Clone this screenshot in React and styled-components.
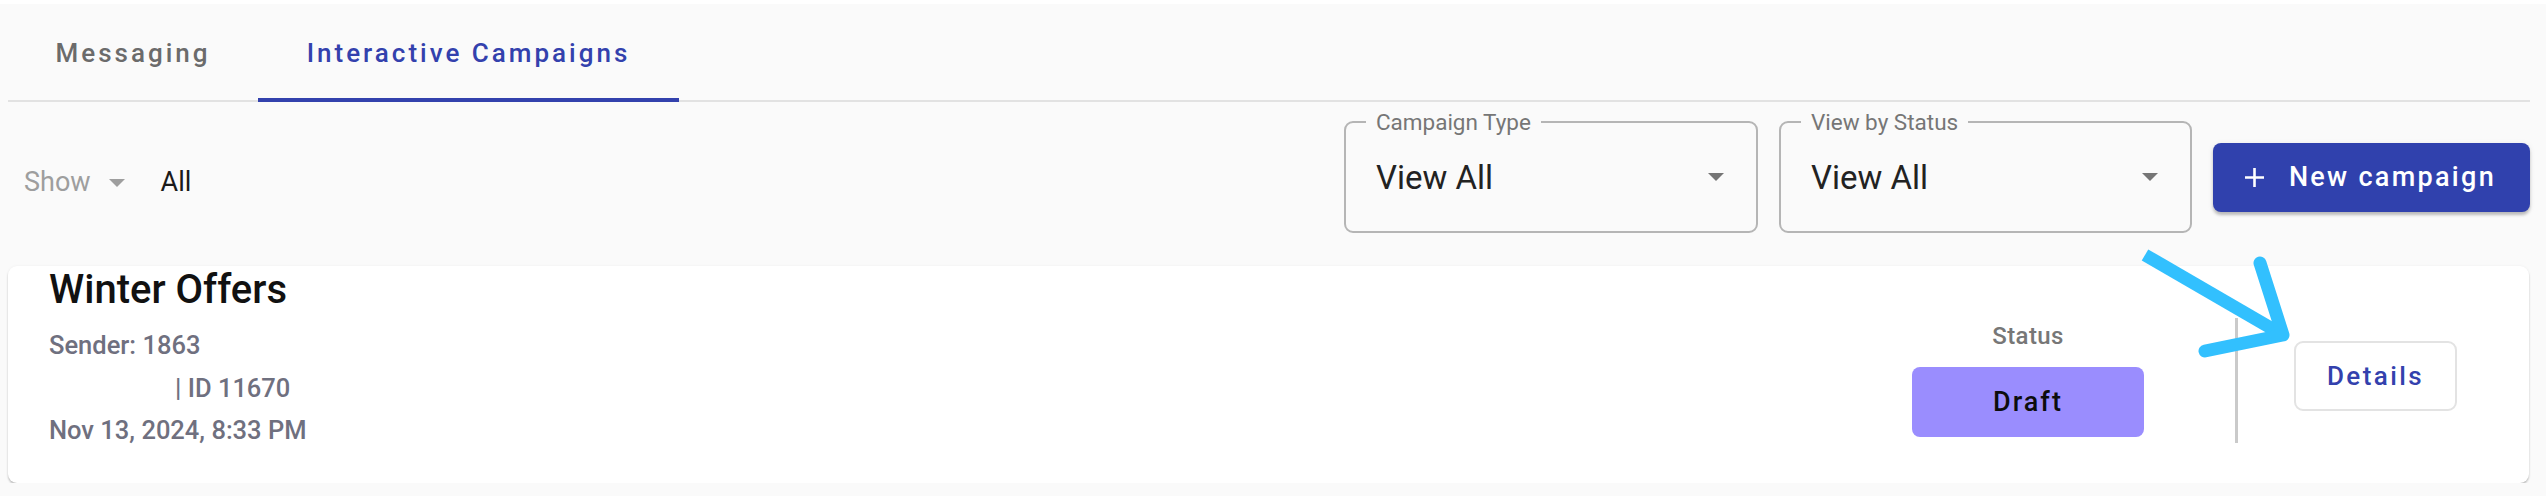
import React from 'react';
import styled, { createGlobalStyle } from 'styled-components';

const GlobalStyle = createGlobalStyle`
  * { box-sizing: border-box; }
  body {
    margin: 0;
    background: #fafafa;
    font-family: Roboto, "Liberation Sans", Arial, sans-serif;
  }
`;

const TopStrip = styled.div`
  height: 4px;
  background: #fff;
`;

const Page = styled.div`
  padding: 0 16px 0 8px;
`;

const TabBar = styled.div`
  display: flex;
  height: 98px;
  border-bottom: 2px solid #e2e2e2;
`;

const Tab = styled.div`
  display: flex;
  align-items: center;
  justify-content: center;
  width: ${({ width }) => width}px;
  padding-top: 4px;
  font-size: 26px;
  font-weight: 500;
  letter-spacing: 3px;
  color: ${({ active }) => (active ? '#3341ad' : '#6b6b6b')};
  border-bottom: 4px solid ${({ active }) => (active ? '#3341ad' : 'transparent')};
  margin-bottom: -2px;
  cursor: pointer;
`;

const FilterRow = styled.div`
  display: flex;
  justify-content: space-between;
  align-items: center;
  padding: 8px 0 33px;
`;

const ShowFilter = styled.div`
  display: flex;
  align-items: center;
  margin: 20px 0 0 16px;
  font-size: 27px;
`;

const ShowLabel = styled.span`
  color: #9e9e9e;
`;

const Caret = styled.span`
  width: 0;
  height: 0;
  margin: ${({ inField }) => (inField ? '0' : '2px 36px 0 18px')};
  border-left: 8px solid transparent;
  border-right: 8px solid transparent;
  border-top: 8px solid ${({ inField }) => (inField ? '#757575' : '#9e9e9e')};
`;

const ShowValue = styled.span`
  color: #1a1a1a;
`;

const Controls = styled.div`
  display: flex;
  align-items: center;
  gap: 21px;
`;

const SelectBox = styled.fieldset`
  margin: 0;
  width: ${({ width }) => width}px;
  padding: 0 20px 11px;
  border: 2px solid #b5b5b5;
  border-radius: 9px;
`;

const SelectLegend = styled.legend`
  padding: 0 10px;
  font-size: 22.5px;
  line-height: 24px;
  color: #767676;
`;

const SelectValue = styled.div`
  display: flex;
  align-items: center;
  justify-content: space-between;
  height: 86px;
  padding: 0 12px 0 10px;
  font-size: 33px;
  color: #222;
`;

const PrimaryButton = styled.button`
  display: flex;
  align-items: center;
  gap: 24px;
  height: 69px;
  margin-top: 11px;
  padding: 0 34px 0 31px;
  border: none;
  border-radius: 8px;
  background: #3041ad;
  color: #fff;
  font-family: inherit;
  font-size: 27px;
  font-weight: 500;
  letter-spacing: 2.3px;
  box-shadow: 0 3px 3px rgba(0, 0, 0, 0.22), 0 1px 6px rgba(0, 0, 0, 0.08);
  cursor: pointer;
`;

const Card = styled.div`
  position: relative;
  display: flex;
  justify-content: space-between;
  align-items: center;
  height: 217px;
  margin-right: 1px;
  padding: 2px 72px 0 41px;
  background: #fff;
  border-radius: 9px;
  box-shadow: 0 2px 2px rgba(0, 0, 0, 0.22), 0 0 3px rgba(0, 0, 0, 0.05);
`;

const Info = styled.div`
  align-self: flex-start;
  display: flex;
  flex-direction: column;
`;

const Title = styled.div`
  font-size: 40px;
  line-height: 44px;
  font-weight: 500;
  color: #111;
  margin-bottom: 12px;
`;

const Meta = styled.div`
  padding-left: ${({ indent }) => indent || 0}px;
  font-size: 25.5px;
  line-height: 42.5px;
  font-weight: 500;
  color: #6f707f;
`;

const Actions = styled.div`
  display: flex;
  align-items: center;
`;

const StatusColumn = styled.div`
  display: flex;
  flex-direction: column;
  align-items: center;
  width: 232px;
  margin: 6px 91px 0 0;
`;

const StatusLabel = styled.div`
  font-size: 24px;
  line-height: 30px;
  font-weight: 500;
  color: #777;
  letter-spacing: 0.4px;
  margin-bottom: 16px;
`;

const StatusPill = styled.div`
  display: flex;
  align-items: center;
  justify-content: center;
  width: 100%;
  height: 70px;
  border-radius: 8px;
  background: ${({ bg }) => bg};
  font-size: 27px;
  font-weight: 500;
  letter-spacing: 2px;
  color: #0d0d0d;
`;

const VDivider = styled.div`
  width: 3px;
  height: 125px;
  margin: 10px 56px 0 0;
  background: #cacaca;
`;

const OutlineButton = styled.button`
  width: 163px;
  height: 70px;
  border: 2px solid #e3e3e3;
  border-radius: 9px;
  background: #fff;
  color: #3341ad;
  font-family: inherit;
  font-size: 26px;
  font-weight: 500;
  letter-spacing: 2.4px;
  cursor: pointer;
`;

const Annotation = styled.svg`
  position: absolute;
  top: -23px;
  right: 229px;
  overflow: visible;
  pointer-events: none;
`;

function PlusIcon() {
  return (
    <svg width="21" height="21" viewBox="0 0 21 21">
      <path d="M10.5 1v19M1 10.5h19" stroke="#fff" strokeWidth="2.6" fill="none" />
    </svg>
  );
}

function Select({ label, value, width }) {
  return (
    <SelectBox width={width}>
      <SelectLegend>{label}</SelectLegend>
      <SelectValue>
        {value}
        <Caret inField />
      </SelectValue>
    </SelectBox>
  );
}

export default function App() {
  return (
    <>
      <GlobalStyle />
      <TopStrip />
      <Page>
        <TabBar>
          <Tab width={250}>Messaging</Tab>
          <Tab width={421} active>Interactive Campaigns</Tab>
        </TabBar>

        <FilterRow>
          <ShowFilter>
            <ShowLabel>Show</ShowLabel>
            <Caret />
            <ShowValue>All</ShowValue>
          </ShowFilter>
          <Controls>
            <Select label="Campaign Type" value="View All" width={414} />
            <Select label="View by Status" value="View All" width={413} />
            <PrimaryButton>
              <PlusIcon />
              New campaign
            </PrimaryButton>
          </Controls>
        </FilterRow>

        <Card>
          <Info>
            <Title>Winter Offers</Title>
            <Meta>Sender: 1863</Meta>
            <Meta indent={126}>| ID 11670</Meta>
            <Meta>Nov 13, 2024, 8:33 PM</Meta>
          </Info>
          <Actions>
            <StatusColumn>
              <StatusLabel>Status</StatusLabel>
              <StatusPill bg="#9a8dfe">Draft</StatusPill>
            </StatusColumn>
            <VDivider />
            <OutlineButton>Details</OutlineButton>
          </Actions>
          <Annotation width="170" height="120" viewBox="0 0 170 120">
            <path d="M15 12 L153 92" stroke="#32c0fe" strokeWidth="13" strokeLinecap="butt" fill="none" />
            <path d="M130 20 L153 92 L75 108" stroke="#32c0fe" strokeWidth="13" strokeLinecap="round" strokeLinejoin="round" fill="none" />
          </Annotation>
        </Card>
      </Page>
    </>
  );
}
